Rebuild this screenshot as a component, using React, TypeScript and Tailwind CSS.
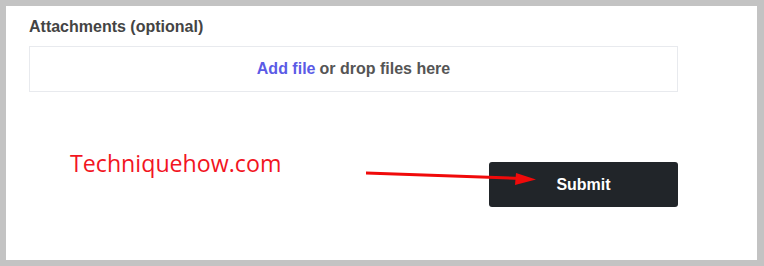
export default function App() {
  return (
    <div className="w-[764px] h-[266px] bg-[#c3c3c3] pt-[6px] pl-[6px] pr-[7px] pb-[6px]">
      <div className="h-full bg-white pl-[23px] pr-[79px] flex flex-col" style={{ fontFamily: '"Liberation Sans", Arial, sans-serif' }}>
        <div className="mt-[11px] h-[20px] leading-[20px] text-[16px] font-bold text-[#444444]">Attachments (optional)</div>
        <div className="mt-[9px] h-[46px] border border-[#e8eaee] flex items-center justify-center text-[16px] font-bold">
          <span className="text-[#5b5be6]">Add file</span>
          <span className="text-[#555555] ml-[4px]">or drop files here</span>
        </div>
        <div className="flex items-start mt-[55px] relative">
          <div className="ml-[41px] mt-[0px] text-[23.2px] leading-[32px] text-[#f2151f]" style={{ fontFamily: '"Open Sans", sans-serif' }}>Techniquehow.com</div>
          <div className="ml-auto mt-[15px] w-[189px] h-[45px] bg-[#212529] rounded-[3px] flex items-center justify-center text-white text-[16px] font-bold">
            Submit
          </div>
          <svg className="absolute left-[337px] top-[20px]" width="180" height="20" viewBox="0 0 180 20">
            <line x1="0" y1="6" x2="155" y2="11.5" stroke="#f00a0a" strokeWidth="3" strokeLinecap="round" />
            <polygon points="170,12.5 150,6 149,18" fill="#f00a0a" />
          </svg>
        </div>
      </div>
    </div>
  );
}
